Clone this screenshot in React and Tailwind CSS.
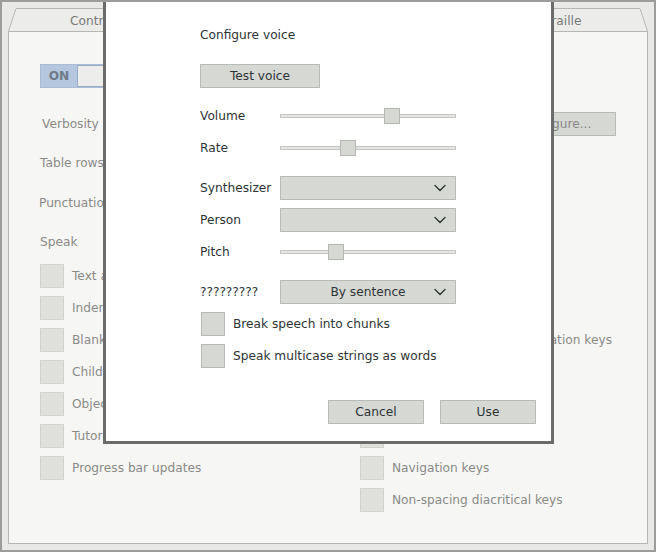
import { ChevronDown } from "lucide-react";

const font = { fontFamily: '"DejaVu Sans", Verdana, sans-serif' };

function BgCheck({ label }) {
  return (
    <div className="flex items-center h-6 gap-2">
      <div className="w-6 h-6 bg-[#dfe0dc] border border-[#d2d3cf] shrink-0" />
      <span className="text-[#8a8a88] whitespace-nowrap">{label}</span>
    </div>
  );
}

function Slider({ pos }) {
  return (
    <div className="relative w-[176px] h-4 flex items-center">
      <div className="w-full h-[4px] bg-[#e4e5e2] border border-[#c4c6c1]" />
      <div
        className="absolute top-0 w-4 h-4 bg-[#d6d8d3] border border-[#b4b6b1]"
        style={{ left: pos }}
      />
    </div>
  );
}

function Combo({ value }) {
  return (
    <div className="w-[176px] h-6 bg-[#d6d8d3] border border-[#b9bbb6] flex items-center relative">
      <span className="flex-1 text-center">{value}</span>
      <ChevronDown size={20} strokeWidth={1.6} className="absolute right-[5px] top-[1px] text-[#2e3436]" />
    </div>
  );
}

function Row({ label, children, className = "" }) {
  return (
    <div className={`flex items-center ${className}`}>
      <span className="w-20 shrink-0 whitespace-nowrap">{label}</span>
      {children}
    </div>
  );
}

function Button({ children, className = "" }) {
  return (
    <div className={`h-6 bg-[#d6d8d3] border border-[#b9bbb6] flex items-center justify-center ${className}`}>
      {children}
    </div>
  );
}

export default function App() {
  return (
    <div
      className="relative w-[656px] h-[552px] overflow-hidden bg-[#e9e9e7] border-2 border-[#9c9c9a] text-[12.2px] leading-4"
      style={font}
    >
      {/* tabs */}
      <div className="flex justify-between h-[23px] mt-[6px] mx-[6px]">
        <div className="flex">
          <svg width="8" height="23" className="shrink-0">
            <polygon points="8,0 0,23 8,23" fill="#ececea" />
            <line x1="8" y1="0.5" x2="0.5" y2="23" stroke="#b6b6b4" strokeWidth="1" />
          </svg>
          <div className="w-[170px] bg-[#ececea] border-t border-r border-[#b6b6b4] pl-[54px] pt-[4px] text-[#7a7a78]">
            Controls
          </div>
        </div>
        <div className="flex">
          <div className="w-[160px] bg-[#ececea] border-t border-l border-[#b6b6b4] pl-[62px] pt-[4px] text-[#7a7a78]">
            Braille
          </div>
          <svg width="8" height="23" className="shrink-0">
            <polygon points="0,0 8,23 0,23" fill="#ececea" />
            <line x1="0" y1="0.5" x2="7.5" y2="23" stroke="#b6b6b4" strokeWidth="1" />
          </svg>
        </div>
      </div>

      {/* panel */}
      <div className="mx-[6px] h-[513px] bg-[#f6f6f4] border border-[#b6b6b4] text-[#8a8a88] relative">
        <div className="pl-[31px] pt-[32px]">
          <div className="flex h-6 w-20 border border-[#a9bcd3] bg-[#b4c7de]">
            <span className="w-[36px] text-center leading-[22px] font-bold text-[#6e7a88]">ON</span>
            <div className="flex-1 bg-[#ededeb] border border-[#98acc6]" />
          </div>

          <div className="flex items-center h-6 mt-[24px] pr-[31px]">
            <span className="pl-[2px]">Verbosity</span>
            <div className="flex-1" />
            <Button className="w-[120px] text-[#8a8a88]">Configure...</Button>
          </div>

          <div className="h-4 mt-[19px]">Table rows</div>
          <div className="h-4 mt-[24px] -ml-px">Punctuation</div>
          <div className="h-4 mt-[23px]">Speak</div>

          <div className="flex mt-[14px]">
            <div className="w-[320px] flex flex-col gap-2">
              <BgCheck label="Text attributes" />
              <BgCheck label="Indentation and justification" />
              <BgCheck label="Blank lines" />
              <BgCheck label="Child position" />
              <BgCheck label="Object mnemonics" />
              <BgCheck label="Tutorial messages" />
              <BgCheck label="Progress bar updates" />
            </div>
            <div className="flex flex-col gap-2 mt-[64px]">
              <BgCheck label="Alphanumeric and punctuation keys" />
              <BgCheck label="Modifier keys" />
              <BgCheck label="Function keys" />
              <BgCheck label="Action keys" />
              <BgCheck label="Navigation keys" />
              <BgCheck label="Non-spacing diacritical keys" />
            </div>
          </div>
        </div>
      </div>

      {/* dialog */}
      <div className="absolute left-[101px] top-[-5px] w-[451px] h-[447px] bg-white border-[3px] border-[#6b6b6b] text-[#2e3436]">
        <div className="pl-[94px] pr-[15px] pt-[27px] flex flex-col">
          <div className="h-4">Configure voice</div>
          <Button className="w-[120px] mt-[21px]">Test voice</Button>
          <Row label="Volume" className="mt-[20px] h-4">
            <Slider pos={104} />
          </Row>
          <Row label="Rate" className="mt-[16px] h-4">
            <Slider pos={60} />
          </Row>
          <Row label="Synthesizer" className="mt-[20px] h-6">
            <Combo value="" />
          </Row>
          <Row label="Person" className="mt-[8px] h-6">
            <Combo value="" />
          </Row>
          <Row label="Pitch" className="mt-[12px] h-4">
            <Slider pos={48} />
          </Row>
          <Row label="?????????" className="mt-[20px] h-6">
            <Combo value="By sentence" />
          </Row>
          <div className="flex items-center gap-2 h-6 mt-[8px] ml-px">
            <div className="w-6 h-6 bg-[#d6d8d3] border border-[#b9bbb6]" />
            <span>Break speech into chunks</span>
          </div>
          <div className="flex items-center gap-2 h-6 mt-[8px] ml-px">
            <div className="w-6 h-6 bg-[#d6d8d3] border border-[#b9bbb6]" />
            <span>Speak multicase strings as words</span>
          </div>
          <div className="flex justify-end gap-4 mt-[32px]">
            <Button className="w-24">Cancel</Button>
            <Button className="w-24">Use</Button>
          </div>
        </div>
      </div>
    </div>
  );
}
